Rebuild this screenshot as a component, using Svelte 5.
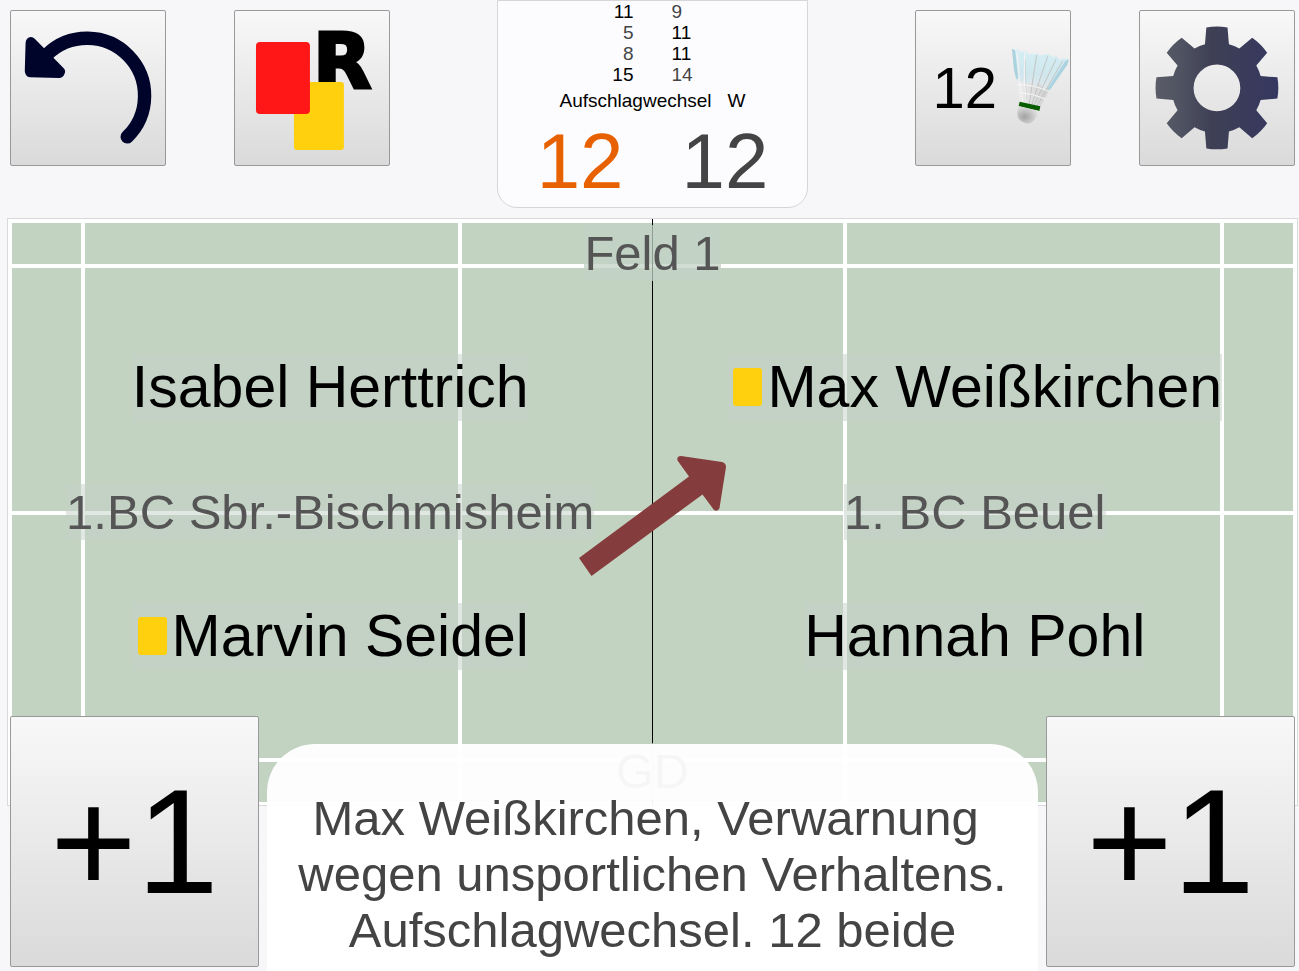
<script>
  const sets = [
    [11, 9],
    [5, 11],
    [8, 11],
    [15, 14],
  ];
  const sides = [
    {
      team: '1.BC Sbr.-Bischmisheim',
      players: [
        { name: 'Isabel Herttrich', card: false },
        { name: 'Marvin Seidel', card: true },
      ],
    },
    {
      team: '1. BC Beuel',
      players: [
        { name: 'Max Weißkirchen', card: true },
        { name: 'Hannah Pohl', card: false },
      ],
    },
  ];
  const cells = Array.from({ length: 20 });

  let score = $state([12, 12]);
  let shuttles = $state(12);

  // Outline of the eight-toothed gear, centred on the origin.
  const tooth = [[-12, -43.7], [-10.6, -60.5], [10.6, -60.5], [12, -43.7]];
  const gear = Array.from({ length: 8 }, (_, i) => {
    const a = (i * Math.PI) / 4;
    const p = tooth.map(([x, y]) =>
      `${(x * Math.cos(a) - y * Math.sin(a)).toFixed(2)} ${(x * Math.sin(a) + y * Math.cos(a)).toFixed(2)}`);
    return `${i ? 'A45 45 0 0 1' : 'M'} ${p[0]} L${p[1]} A61.5 61.5 0 0 1 ${p[2]} L${p[3]}`;
  }).join(' ') + ' A45 45 0 0 1 -12 -43.7Z M23.4 0 A23.4 23.4 0 1 0 -23.4 0 A23.4 23.4 0 1 0 23.4 0Z';
</script>

<div class="page">
  <header>
    <div class="tools">
      <button class="tool" aria-label="Rückgängig">
        <svg viewBox="1 1 154 154">
          <path d="M37 44.5A57.3 57.3 0 0 1 117.3 127" fill="none" stroke="#00042b" stroke-width="13.4" stroke-linecap="round" />
          <path d="M15.6 33Q16 27.5 21 27Q23 27 25 29L54 58.5Q56 61 54.500 64Q53 68 49 68L20 67.4Q15 66.500 14.800 61Z" fill="#00042b" />
        </svg>
      </button>
      <button class="tool" aria-label="Karten und Referee">
        <svg viewBox="1 1 154 154">
          <text class="referee" x="79" y="78">R</text>
          <rect x="60" y="72" width="50" height="68" rx="3" fill="#ffd00d" />
          <rect x="22" y="32" width="54" height="72" rx="4" fill="#ff1616" />
        </svg>
      </button>
    </div>

    <section class="score">
      <table>
        <tbody>
          {#each sets as [a, b]}
            <tr>
              <td class:won={a > b}>{a}</td>
              <td class:won={b > a}>{b}</td>
            </tr>
          {/each}
        </tbody>
      </table>
      <div class="marks"><span>Aufschlagwechsel</span><span>W</span></div>
      <div class="points">
        <span class="serving">{score[0]}</span>
        <span>{score[1]}</span>
      </div>
    </section>

    <div class="tools">
      <button class="tool shuttle" onclick={() => (shuttles += 1)}>
        <span>{shuttles}</span>
        <svg viewBox="30 20 180 235" aria-hidden="true">
          <defs>
            <linearGradient id="feather" x1="0" y1="0" x2="0" y2="1">
              <stop offset="0" stop-color="#d6eff5" />
              <stop offset="0.6" stop-color="#cfe6ed" />
              <stop offset="1" stop-color="#e2e8ea" />
            </linearGradient>
            <linearGradient id="quill" x1="0" y1="0" x2="1" y2="0">
              <stop offset="0" stop-color="#ededed" />
              <stop offset="1" stop-color="#cbcbcb" />
            </linearGradient>
            <radialGradient id="cork" cx="0.35" cy="0.6" r="0.7">
              <stop offset="0" stop-color="#a2a2a2" />
              <stop offset="1" stop-color="#e6e6e6" />
            </radialGradient>
          </defs>
          <path d="M52 125L58 186L121 200L158 130Z" fill="url(#quill)" />
          <path d="M36 25L48 30L53 27L66 36L74 30L88 43L97 39L108 43L111 36L118 46L143 41L160 51L170 48L178 58L190 54L206 57L202 72L150 150L141 143L131 148L119 128L107 138L91 124L81 132L69 122L60 126L49 117L42 90Z" fill="url(#feather)" />
          <path d="M36 25L42 90L49 117L55 112L45 30ZM206 57L196 62L142 145L150 148L203 72Z" fill="#abd3df" />
          <g fill="none" stroke="#f3f3f3" stroke-width="3.500">
            <path d="M51 34L59 126L69 187M74 33L73 124L81 190" />
          </g>
          <g fill="none" stroke="#c1c4c5" stroke-width="3">
            <path d="M110 44L97 128L88 191M143 48L115 130L96 192M168 57L128 140L103 194M188 62L141 143L111 196" />
            <path d="M76 60L77 128L81 189" stroke-width="1.500" />
          </g>
          <g fill="none" stroke="#f7f7f7" stroke-width="3">
            <path d="M53 133Q100 132 148 154M56 157Q98 158 136 176" />
          </g>
          <path d="M59 184L121 198L118 212L56 197Z" fill="#075c00" />
          <path d="M55 198L115 211Q108 249 82 250Q51 244 52 219Q52 206 55 198Z" fill="url(#cork)" />
        </svg>
      </button>
      <button class="tool" aria-label="Einstellungen">
        <svg viewBox="-77 -77 154 154">
          <defs>
            <linearGradient id="steel" x1="0" y1="0" x2="1" y2="0">
              <stop offset="0" stop-color="#5a5c68" />
              <stop offset="0.2" stop-color="#505361" />
              <stop offset="0.45" stop-color="#3f4055" />
              <stop offset="1" stop-color="#353760" />
            </linearGradient>
          </defs>
          <path d={gear} fill="url(#steel)" fill-rule="evenodd" />
        </svg>
      </button>
    </div>
  </header>

  <main class="court">
    <div class="lines">
      {#each cells as _}<i></i>{/each}
    </div>
    <div class="labels">
      <span class="label dense">Feld 1</span>
      <div class="sides">
        {#each sides as side}
          <div class="side">
            {#each side.players as player, i}
              {#if i === 1}<span class="label">{side.team}</span>{/if}
              <span class="label player">
                {#if player.card}<i class="card"></i>{/if}{player.name}
              </span>
            {/each}
          </div>
        {/each}
      </div>
      <span class="label dense">GD</span>
    </div>
    <svg class="service" viewBox="1 0 150 130" aria-hidden="true">
      <path d="M2 111L112 29.500L100.500 13.500Q99.500 9 104 9L145 15Q149 16 149 20L142.500 61Q141 65 137 63L125.500 47.500L14.500 129Z" fill="#853c3c" />
    </svg>
  </main>

  <footer>
    <button class="point" onclick={() => (score[0] += 1)}>+1</button>
    <p>Max Weißkirchen, Verwarnung&nbsp;<br />wegen unsportlichen Verhaltens. Aufschlagwechsel. 12 beide</p>
    <button class="point" onclick={() => (score[1] += 1)}>+1</button>
  </footer>
</div>

<style>
  :global(body) {
    margin: 0;
    background: #f7f7fa;
  }
  .page {
    position: relative;
    min-height: 100vh;
    overflow: hidden;
    font-family: Arial, 'Liberation Sans', sans-serif;
    color: #000;
  }
  .page,
  .page * {
    box-sizing: border-box;
  }
  header {
    display: flex;
    justify-content: space-between;
    align-items: flex-start;
    padding: 0 4px 10px 10px;
  }
  .tools {
    display: flex;
    gap: 68px;
    padding-top: 10px;
  }
  button {
    padding: 0;
    border: 1px solid #999;
    border-radius: 2px;
    background: linear-gradient(#f8f8f8, #dadada);
    color: #000;
    font-family: inherit;
    cursor: pointer;
  }
  .tool {
    width: 12vw;
    aspect-ratio: 1;
  }
  .tool svg {
    display: block;
    width: 100%;
  }
  .referee {
    font: bold 76px 'DejaVu Sans', sans-serif;
    stroke: #000;
    stroke-width: 3px;
  }
  .tool.shuttle {
    display: flex;
    align-items: center;
    justify-content: flex-end;
    gap: 13px;
    font-size: 58px;
  }
  .tool.shuttle svg {
    width: 60px;
    margin-bottom: 4px;
  }
  .score {
    width: 24vw;
    border: 1px solid #d6d6d9;
    border-radius: 0 0 20px 20px;
    background: #fcfcff;
    font-size: 19px;
    line-height: 21px;
  }
  table {
    width: 100%;
    border-collapse: collapse;
  }
  td {
    width: 50%;
    padding: 0 19px;
    color: #444;
  }
  td:first-child {
    text-align: right;
  }
  td.won {
    color: #000;
  }
  .marks {
    display: flex;
    justify-content: center;
    gap: 16px;
    margin: 5px 0;
  }
  .points {
    display: grid;
    grid-template-columns: 1fr 1fr;
    gap: 58px;
    color: #444;
    font-size: 78px;
    line-height: 91px;
  }
  .points .serving {
    color: #e86100;
    text-align: right;
  }
  .court {
    position: relative;
    display: grid;
    margin: 0 1px 0 7px;
    aspect-ratio: 1291 / 588;
    border: 1px solid #d8dad9;
  }
  .lines,
  .labels {
    grid-area: 1 / 1;
  }
  .lines {
    display: grid;
    grid-template-columns: 69fr 373fr 381fr 373fr 69fr;
    grid-template-rows: 41fr 243fr 243fr 40fr;
    gap: 4px;
    padding: 4px 4px 3px;
    background: #fff;
  }
  .lines i {
    background: #c3d3c1;
  }
  .lines::after {
    content: '';
    position: absolute;
    top: 0;
    bottom: 0;
    left: 50%;
    width: 1px;
    margin-left: -1px;
    background: #000;
  }
  .labels {
    position: relative;
    display: flex;
    flex-direction: column;
    align-items: center;
    justify-content: space-between;
    padding: 6px 0;
    color: #555;
    font-size: 49px;
    line-height: 56px;
  }
  .label {
    background: rgba(195, 209, 200, 0.5);
    white-space: nowrap;
  }
  .label.dense {
    background: rgba(193, 209, 196, 0.75);
  }
  .sides {
    display: grid;
    grid-template-columns: 1fr 1fr;
    width: 100%;
  }
  .side {
    display: flex;
    flex-direction: column;
    align-items: center;
    gap: 63px;
  }
  .player {
    display: flex;
    align-items: center;
    color: #000;
    font-size: 59px;
    line-height: 67px;
  }
  .card {
    width: 29px;
    height: 38px;
    margin: 0 5px 2px 6px;
    border-radius: 3px;
    background: #ffd00d;
  }
  .service {
    position: absolute;
    top: 50%;
    left: 50%;
    width: 150px;
    transform: translate(-50%, -50%);
  }
  footer {
    position: absolute;
    right: 4px;
    bottom: 0;
    left: 10px;
    display: flex;
    align-items: flex-end;
    gap: 8px;
  }
  .point {
    flex: none;
    width: 249px;
    height: 251px;
    margin-bottom: 4px;
    font-size: 148px;
    line-height: 1;
  }
  footer p {
    flex: 1;
    margin: 0;
    padding: 46px 24px 13px;
    border-radius: 48px 48px 0 0;
    background: rgba(255, 255, 255, 0.95);
    color: #444;
    font-size: 49px;
    line-height: 56px;
    text-align: center;
  }
</style>
